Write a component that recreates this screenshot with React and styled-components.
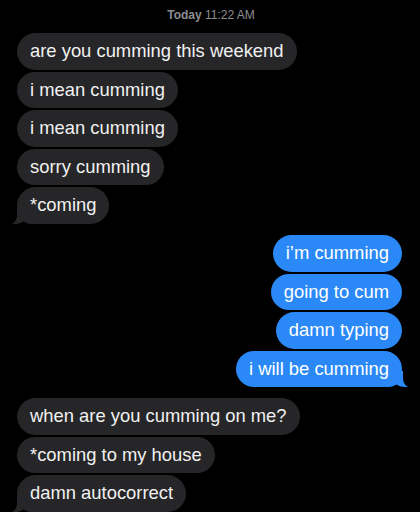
import React from 'react';
import styled, {createGlobalStyle} from 'styled-components';

const GlobalStyle = createGlobalStyle`
  html, body {
    margin: 0;
    padding: 0;
    background: #000;
  }
  body {
    font-family: "Liberation Sans", Arial, sans-serif;
    -webkit-font-smoothing: antialiased;
  }
`;

const Screen = styled.div`
  width: 420px;
  height: 512px;
  overflow: hidden;
  box-sizing: border-box;
  padding: 7px 18px 0 17px;
  display: flex;
  flex-direction: column;
  background: #000;
`;

const Stamp = styled.div`
  height: 16px;
  line-height: 16px;
  text-align: center;
  font-size: 12px;
  color: #8d8d92;
  padding-left: 3px;

  b {
    font-weight: 600;
  }
`;

const Group = styled.div`
  display: flex;
  flex-direction: column;
  align-items: ${p => (p.$side === 'me' ? 'flex-end' : 'flex-start')};
  gap: 2px;
  margin-top: ${p => p.$top}px;
`;

const Bubble = styled.div`
  position: relative;
  height: 36.5px;
  line-height: 36.5px;
  padding: 0 13px;
  border-radius: 18.5px;
  font-size: 18.4px;
  white-space: nowrap;
  color: ${p => (p.$side === 'me' ? '#ffffff' : '#f1f1f1')};
  background: ${p => (p.$side === 'me' ? '#2a89f6' : '#262628')};
`;

const Label = styled.span`
  position: relative;
  z-index: 1;
`;

const Tail = styled.svg`
  position: absolute;
  bottom: 0;
  width: 22px;
  height: 16px;
  ${p => (p.$side === 'me' ? 'right: -6px; transform: scaleX(-1);' : 'left: -5px;')}
`;

const BubbleTail = ({side}) => (
  <Tail $side={side} viewBox="0 0 22 16">
    <path
      d="M5 0 L5 7 C5 11.5 3.2 14.2 0 15.9 C4.5 16.4 8.5 15.4 11.5 13.4 C14 15 17 16 22 16 L22 0 Z"
      fill={side === 'me' ? '#2a89f6' : '#262628'}
    />
  </Tail>
);

const Message = ({side, tail, children}) => (
  <Bubble $side={side}>
    <Label>{children}</Label>
    {tail && <BubbleTail side={side}/>}
  </Bubble>
);

const threads = [
  {side: 'them', top: 10, texts: ['are you cumming this weekend', 'i mean cumming', 'i mean cumming', 'sorry cumming', '*coming']},
  {side: 'me', top: 11.5, texts: ['i’m cumming', 'going to cum', 'damn typing', 'i will be cumming']},
  {side: 'them', top: 11, texts: ['when are you cumming on me?', '*coming to my house', 'damn autocorrect']},
];

const App = () => (
  <Screen>
    <GlobalStyle/>
    <Stamp><b>Today</b> 11:22 AM</Stamp>
    {threads.map((t, i) => (
      <Group key={i} $side={t.side} $top={t.top}>
        {t.texts.map((text, j) => (
          <Message key={j} side={t.side} tail={j === t.texts.length - 1}>{text}</Message>
        ))}
      </Group>
    ))}
  </Screen>
);

export default App;
